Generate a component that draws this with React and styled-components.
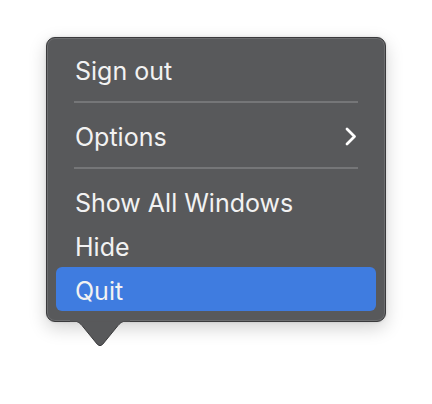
import styled, { createGlobalStyle } from 'styled-components';

const GlobalStyle = createGlobalStyle`
  html, body {
    margin: 0;
    padding: 0;
    background: #ffffff;
  }
  body {
    font-family: Inter, "Noto Sans", "Liberation Sans", sans-serif;
  }
`;

const Page = styled.div`
  width: 432px;
  height: 404px;
  padding: 37px 0 0 46px;
  box-sizing: border-box;
`;

const Menu = styled.div`
  position: relative;
  width: 340px;
  box-sizing: border-box;
  padding: 9px 9px 10px;
  background: #58595b;
  border: 1px solid #3a3a3c;
  border-radius: 9px;
  box-shadow:
    inset 0 0 0 1px #6c6d6f,
    0 6px 18px rgba(0, 0, 0, 0.18),
    0 0 3px rgba(0, 0, 0, 0.12);
  display: flex;
  flex-direction: column;
`;

const Item = styled.div`
  height: 44px;
  box-sizing: border-box;
  display: flex;
  align-items: center;
  justify-content: space-between;
  padding: 3px 19px 0 19px;
  border-radius: 6px;
  font-size: 25px;
  color: #f2f2f2;
  background: ${p => (p.$active ? '#3f7ce0' : 'transparent')};
`;

const Separator = styled.div`
  height: 22px;
  display: flex;
  align-items: center;
  padding: 0 18px;

  &::after {
    content: '';
    flex: 1;
    height: 2px;
    background: #757678;
  }
`;

const Tail = styled.svg`
  position: absolute;
  left: 23px;
  top: 100%;
  margin-top: -1px;
`;

const Chevron = () => (
  <svg width="12" height="19" viewBox="0 0 12 19">
    <path d="M2 2 L9.5 9.5 L2 17" fill="none" stroke="#ffffff" strokeWidth="2.8" strokeLinecap="round" strokeLinejoin="round" />
  </svg>
);

export default function App() {
  return (
    <>
      <GlobalStyle />
      <Page>
        <Menu>
          <Item>Sign out</Item>
          <Separator />
          <Item>
            Options
            <Chevron />
          </Item>
          <Separator />
          <Item>Show All Windows</Item>
          <Item>Hide</Item>
          <Item $active>Quit</Item>
          <Tail width="60" height="27" viewBox="0 0 60 27">
            <path
              d="M0 0.5 C6 0.5 9 2 12 5.5 L27.5 24.5 Q30 27 32.5 24.5 L48 5.5 C51 2 54 0.5 60 0.5 Z"
              fill="#58595b"
              stroke="#3a3a3c"
              strokeWidth="1"
            />
            <rect x="0" y="0" width="60" height="1.5" fill="#58595b" />
          </Tail>
        </Menu>
      </Page>
    </>
  );
}
